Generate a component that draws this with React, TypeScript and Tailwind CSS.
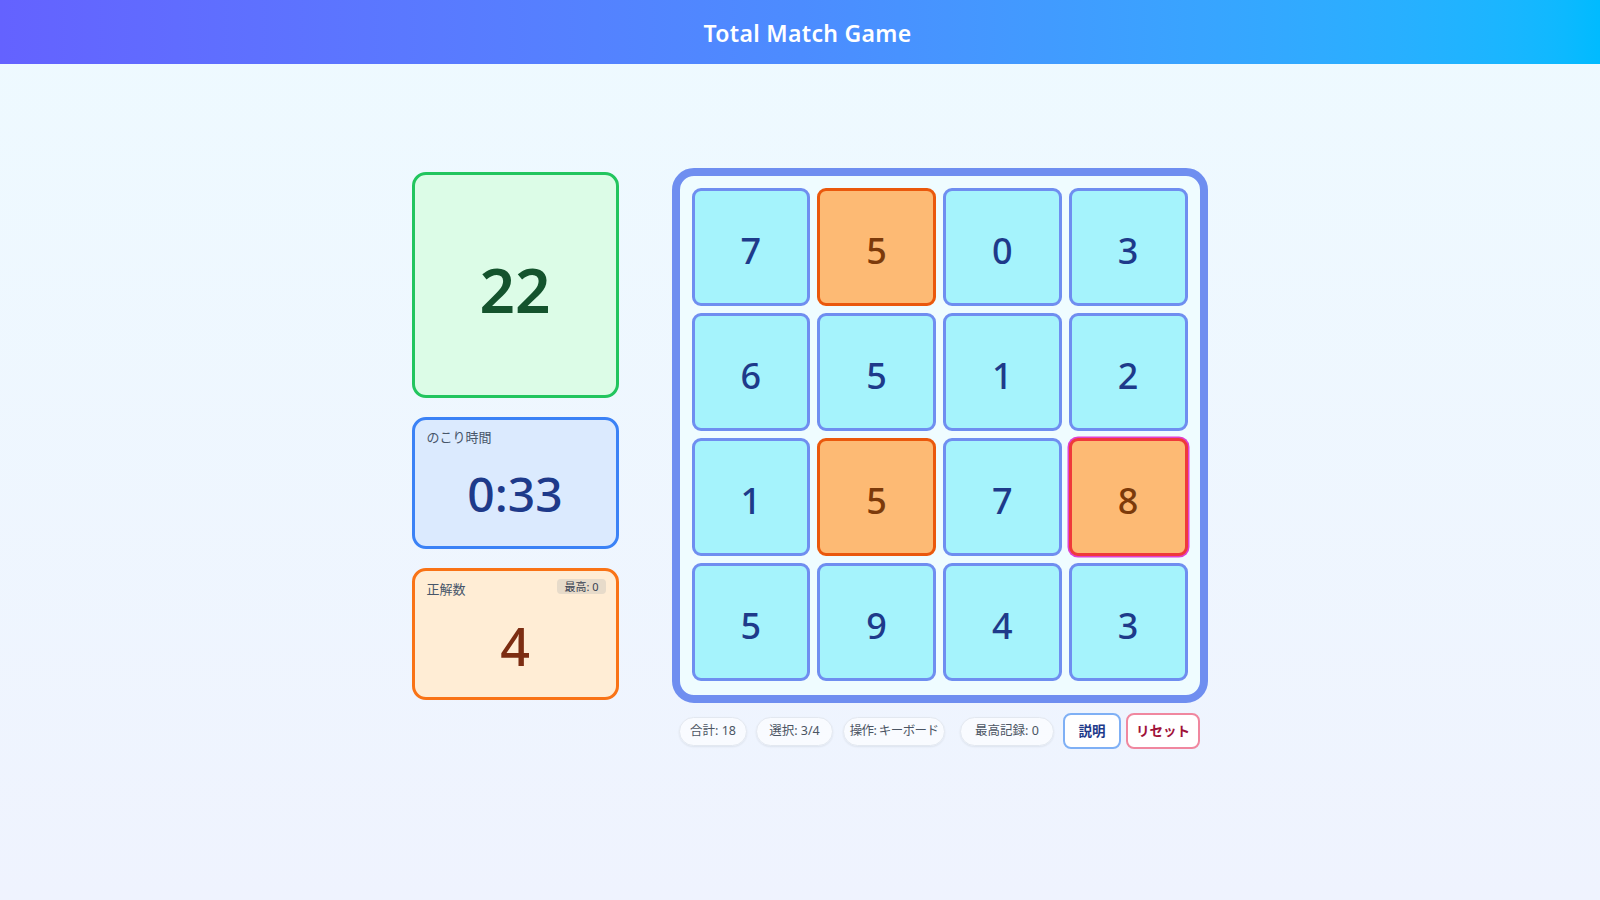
import React from 'react';

const FONT = { fontFamily: '"Noto Sans", "Noto Sans CJK JP", sans-serif' };

const cells = [
  { n: 7 }, { n: 5, sel: true }, { n: 0 }, { n: 3 },
  { n: 6 }, { n: 5 }, { n: 1 }, { n: 2 },
  { n: 1 }, { n: 5, sel: true }, { n: 7 }, { n: 8, sel: true, focus: true },
  { n: 5 }, { n: 9 }, { n: 4 }, { n: 3 },
];

function Cell({ n, sel, focus }: { n: number; sel?: boolean; focus?: boolean }) {
  let cls = 'bg-[#a5f3fc] border-[#6f8ef0] text-[#1e3a8a]';
  if (sel) cls = 'bg-[#fdba74] border-[#ea580c] text-[#7c3a0a]';
  if (focus) cls = 'bg-[#fdba74] border-[#ef3a3a] text-[#7c3a0a] shadow-[0_0_0_1.5px_#e040d0]';
  return (
    <button
      type="button"
      className={`h-[118px] pt-[7px] rounded-[9px] border-[3px] flex items-center justify-center text-[36px] font-medium ${cls}`}
    >
      {n}
    </button>
  );
}

function Pill({ children, className = '' }: { children: React.ReactNode; className?: string }) {
  return (
    <span
      className={`h-[29px] flex items-center justify-center rounded-full bg-white/60 border border-[#e3e8f0] shadow-[0_1px_2px_rgba(15,23,42,0.08)] text-[12.5px] text-[#4b5563] whitespace-nowrap ${className}`}
    >
      {children}
    </span>
  );
}

export default function App() {
  return (
    <div className="min-h-screen bg-gradient-to-b from-[#eefaff] to-[#eff3fe]" style={FONT}>
      {/* Header */}
      <header className="h-16 flex items-center justify-center pl-[15px] pt-[2px] bg-gradient-to-r from-[#6462ff] via-[#4c8cff] to-[#00bbff]">
        <h1 className="text-white text-[23px] font-semibold tracking-[0.3px]">Total Match Game</h1>
      </header>

      <main className="flex justify-center pt-[104px] pl-[19px]">
        <div className="flex items-start gap-[53px]">
          {/* Left column */}
          <div className="flex flex-col gap-[19px] mt-[4px] w-[207px]">
            <div className="h-[226px] pt-[8px] rounded-[14px] border-[3px] border-[#22c55e] bg-[#dcfce7] flex items-center justify-center">
              <span className="text-[62px] font-semibold text-[#14532d] leading-none">22</span>
            </div>

            <div className="h-[132px] rounded-[14px] border-[3px] border-[#3b82f6] bg-[#dbeafe] flex flex-col px-3 pt-[8px] pb-[8px]">
              <span className="text-[13px] text-[#475569] leading-[18px]">のこり時間</span>
              <div className="flex-1 flex items-center justify-center pt-[4px]">
                <span className="text-[48px] font-medium text-[#1e3a8a] leading-none">0:33</span>
              </div>
            </div>

            <div className="h-[132px] rounded-[14px] border-[3px] border-[#f97316] bg-[#ffedd5] flex flex-col px-3 pt-[8px] pb-[8px]">
              <div className="flex items-start justify-between">
                <span className="text-[13px] text-[#475569] leading-[18px] mt-[1px]">正解数</span>
                <span className="text-[11px] text-[#374151] bg-[#e7dbca] rounded-[4px] px-[7px] leading-[15px] -mr-[2px]">
                  最高: 0
                </span>
              </div>
              <div className="flex-1 flex items-center justify-center pt-[4px]">
                <span className="text-[52px] font-medium text-[#7c2d12] leading-none">4</span>
              </div>
            </div>
          </div>

          {/* Board + controls */}
          <div className="flex flex-col">
            <div className="w-[536px] rounded-[22px] border-[8px] border-[#6f8ef0] bg-[#effcff] px-[12px] pt-[12px] pb-[14px] grid grid-cols-4 gap-[7px]">
              {cells.map((c, i) => (
                <Cell key={i} n={c.n} sel={c.sel} focus={c.focus} />
              ))}
            </div>

            <div className="flex items-center justify-center mt-[10px]">
              <Pill className="w-[68px]">合計: 18</Pill>
              <Pill className="ml-[9px] w-[77px]">選択: 3/4</Pill>
              <Pill className="ml-[10px] w-[102px] tracking-[-0.6px]">操作: キーボード</Pill>
              <Pill className="ml-[15px] w-[94px]">最高記録: 0</Pill>
              <button
                type="button"
                className="ml-[9px] h-[36px] w-[58px] rounded-[8px] border-2 border-[#7fb0f5] bg-white text-[13.5px] font-bold text-[#1e3a8a]"
              >
                説明
              </button>
              <button
                type="button"
                className="ml-[5px] h-[36px] w-[74px] rounded-[8px] border-2 border-[#f0879f] bg-white text-[13.5px] font-bold text-[#9f1239]"
              >
                リセット
              </button>
            </div>
          </div>
        </div>
      </main>
    </div>
  );
}
